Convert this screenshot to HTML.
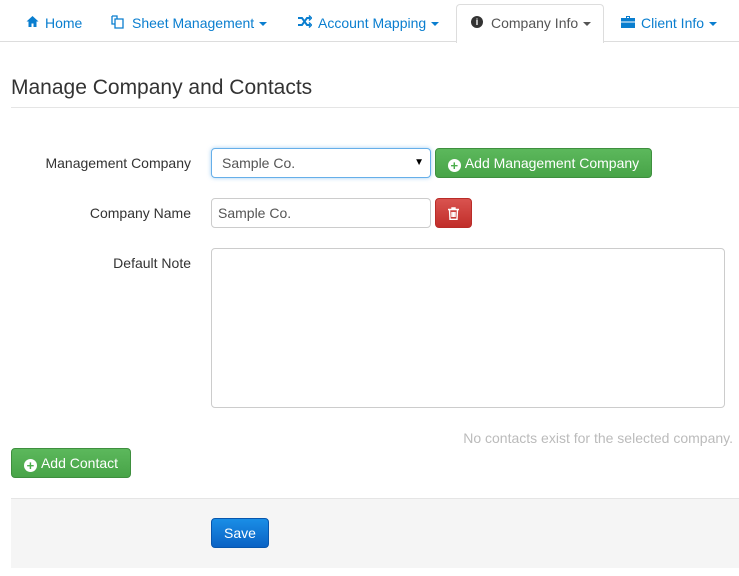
<!DOCTYPE html>
<html><head><style>
*{box-sizing:border-box}
body{margin:0;width:739px;height:576px;overflow:hidden;background:#fff;font-family:"Liberation Sans",sans-serif;font-size:14px;color:#333;position:relative}
.nav{position:absolute;left:0;top:0;width:739px;height:42px;border-bottom:1px solid #ddd}
.tab{position:absolute;top:15px;color:#0a7ecf;font-size:14px;white-space:nowrap}
.ic{position:absolute;top:15px}
.active{position:absolute;left:456px;top:4px;width:148px;height:39px;border:1px solid #ddd;border-bottom:none;border-radius:4px 4px 0 0;background:#fff}
.caret{display:inline-block;width:0;height:0;border-left:4px solid transparent;border-right:4px solid transparent;border-top:4px solid currentColor;vertical-align:middle;margin-left:5px}
h1{position:absolute;left:11px;top:76px;margin:0;font-size:21px;font-weight:normal;color:#333}
.hr{position:absolute;left:11px;top:107px;width:728px;border-top:1px solid #e5e5e5}
.lbl{position:absolute;right:548px;color:#333;font-size:14px}
.inp{position:absolute;border:1px solid #ccc;border-radius:4px;background:#fff;padding:0 6px;line-height:28px;font-size:14px;color:#555}
.btn{position:absolute;border-radius:4px;color:#fff;font-size:14px;text-align:center}
.g{background:linear-gradient(#5cb85c,#48a448);border:1px solid #3e8f3e}
.plus{display:inline-block;width:13px;height:13px;border-radius:50%;background:#fff;color:#4cae4c;font-size:13px;line-height:13px;font-weight:bold;text-align:center;vertical-align:-2px;margin-right:4px}
</style></head><body>
<div class="nav">
<div class="active"></div>
<svg class="ic" style="left:26px" width="13" height="13" viewBox="0 0 13 13"><path d="M6.5 1L0.5 6.5H2.5V12H5.5V8.5H7.5V12H10.5V6.5H12.5Z" fill="#0a7ecf"/></svg>
<span class="tab" style="left:45px">Home</span>
<svg class="ic" style="left:111px" width="14" height="14" viewBox="0 0 14 14" fill="none" stroke="#0a7ecf" stroke-width="1.3"><path d="M1 1H6V4M1 1V9H4M4 4H12V13H4Z"/></svg>
<span class="tab" style="left:132px">Sheet Management<span class="caret"></span></span>
<svg class="ic" style="left:298px" width="14" height="13" viewBox="0 0 14 13" fill="none" stroke="#0a7ecf" stroke-width="2"><path d="M0 3H4L9 10H12M0 10H4L9 3H12"/><path d="M11 0.5L13.5 3L11 5.5M11 7.5L13.5 10L11 12.5" stroke-width="1.5"/></svg>
<span class="tab" style="left:318px">Account Mapping<span class="caret"></span></span>
<span class="ic" style="left:471px;display:inline-block;width:12px;height:12px;border-radius:50%;background:#333;color:#fff;font-size:9px;line-height:12px;text-align:center;font-weight:bold;top:16px">i</span>
<span class="tab" style="left:491px;color:#555">Company Info<span class="caret"></span></span>
<svg class="ic" style="left:621px;top:16px" width="14" height="12" viewBox="0 0 14 12"><path d="M5 0H9V2H14V12H0V2H5Z M6 1V2H8V1Z" fill="#0a7ecf" fill-rule="evenodd"/><path d="M0 6H14" stroke="#fff" stroke-width="1"/></svg>
<span class="tab" style="left:641px">Client Info<span class="caret"></span></span>
</div>
<h1>Manage Company and Contacts</h1>
<div class="hr"></div>
<div class="lbl" style="top:155px">Management Company</div>
<div class="inp" style="left:211px;top:148px;width:220px;height:30px;border-color:#66afe9;box-shadow:0 0 4px rgba(102,175,233,.6);padding-left:10px">Sample Co.<span style="position:absolute;right:6px;font-size:10px;color:#000">▼</span></div>
<div class="btn g" style="left:435px;top:148px;width:217px;height:30px;line-height:28px"><span class="plus">+</span>Add Management Company</div>
<div class="lbl" style="top:205px">Company Name</div>
<div class="inp" style="left:211px;top:198px;width:220px;height:30px">Sample Co.</div>
<div class="btn" style="left:435px;top:198px;width:37px;height:30px;background:linear-gradient(#d9534f,#c12e2a);border:1px solid #b92c28">
<svg style="position:absolute;left:12px;top:8px" width="11" height="13" viewBox="0 0 11 13" fill="none" stroke="#fff" stroke-width="1.4"><path d="M0 2.5H11M4 2.5V1H7V2.5M1.5 2.5L2 12.3H9L9.5 2.5M4 5V10M5.5 5V10M7 5V10"/></svg></div>
<div class="lbl" style="top:255px">Default Note</div>
<div class="inp" style="left:211px;top:248px;width:514px;height:160px"></div>
<div style="position:absolute;right:6px;top:430px;color:#bbb;font-size:14px">No contacts exist for the selected company.</div>
<div class="btn g" style="left:11px;top:448px;width:120px;height:30px;line-height:28px"><span class="plus">+</span>Add Contact</div>
<div style="position:absolute;left:11px;top:498px;width:728px;height:70px;background:#f5f5f5;border-top:1px solid #e5e5e5"></div>
<div class="btn" style="left:211px;top:518px;width:58px;height:30px;line-height:28px;background:linear-gradient(#1a8ee6,#0a62c4);border:1px solid #0756ad">Save</div>
</body></html>
